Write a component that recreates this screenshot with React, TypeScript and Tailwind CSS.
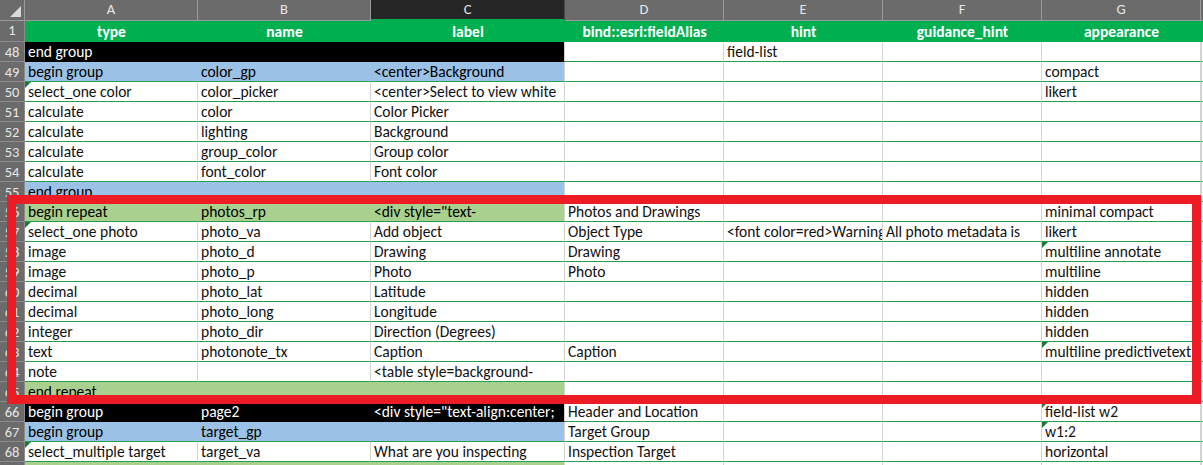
import React from "react";

type Fill = "black" | "blue" | "green" | undefined;
type Row = { n: number; fill?: Fill; c: string[]; tri?: number[]; joinNext?: boolean; hideNum?: boolean };

const rows: Row[] = [
  { n: 48, fill: "black", c: ["end group", "", "", "", "field-list", "", ""], joinNext: true },
  { n: 49, fill: "blue", c: ["begin group", "color_gp", "<center>Background", "", "", "", "compact"] },
  { n: 50, c: ["select_one color", "color_picker", "<center>Select to view white", "", "", "", "likert"], tri: [0] },
  { n: 51, c: ["calculate", "color", "Color Picker", "", "", "", ""] },
  { n: 52, c: ["calculate", "lighting", "Background", "", "", "", ""] },
  { n: 53, c: ["calculate", "group_color", "Group color", "", "", "", ""] },
  { n: 54, c: ["calculate", "font_color", "Font color", "", "", "", ""] },
  { n: 55, fill: "blue", c: ["end group", "", "", "", "", "", ""] },
  { n: 56, fill: "green", c: ["begin repeat", "photos_rp", '<div style="text-', "Photos and Drawings", "", "", "minimal compact"] },
  { n: 57, c: ["select_one photo", "photo_va", "Add object", "Object Type", "<font color=red>Warning", "All photo metadata is", "likert"], tri: [0] },
  { n: 58, c: ["image", "photo_d", "Drawing", "Drawing", "", "", "multiline annotate"], tri: [6] },
  { n: 59, c: ["image", "photo_p", "Photo", "Photo", "", "", "multiline"] },
  { n: 60, c: ["decimal", "photo_lat", "Latitude", "", "", "", "hidden"] },
  { n: 61, c: ["decimal", "photo_long", "Longitude", "", "", "", "hidden"] },
  { n: 62, c: ["integer", "photo_dir", "Direction (Degrees)", "", "", "", "hidden"] },
  { n: 63, c: ["text", "photonote_tx", "Caption", "Caption", "", "", "multiline predictivetext"], tri: [6] },
  { n: 64, c: ["note", "", "<table style=background-", "", "", "", ""] },
  { n: 65, fill: "green", c: ["end repeat", "", "", "", "", "", ""] },
  { n: 66, fill: "black", c: ["begin group", "page2", '<div style="text-align:center;', "Header and Location", "", "", "field-list w2"], tri: [6], joinNext: true },
  { n: 67, fill: "blue", c: ["begin group", "target_gp", "", "Target Group", "", "", "w1:2"], tri: [6] },
  { n: 68, c: ["select_multiple target", "target_va", "What are you inspecting", "Inspection Target", "", "", "horizontal"], tri: [0] },
  { n: 69, fill: "green", c: ["", "", "", "", "", "", ""], hideNum: true },
];

const widths = ["w-[173px]", "w-[173px]", "w-[194px]", "w-[159px]", "w-[159px]", "w-[159px]", "w-[159px]"];
const letters = ["A", "B", "C", "D", "E", "F", "G"];
const headers = ["type", "name", "label", "bind::esri:fieldAlias", "hint", "guidance_hint", "appearance"];

const fillBg: Record<string, string> = {
  black: "bg-black text-white",
  blue: "bg-[#9bc2e6] text-black",
  green: "bg-[#a9d08e] text-black",
};
const fillBorderR: Record<string, string> = {
  black: "border-r-black",
  blue: "border-r-[#9bc2e6]",
  green: "border-r-[#a9d08e]",
};
const fillBorderB: Record<string, string> = {
  black: "border-b-black",
  blue: "border-b-[#9bc2e6]",
  green: "border-b-[#a9d08e]",
};

function Tri() {
  return (
    <span className="absolute left-0 top-0 h-0 w-0 border-t-[6px] border-r-[6px] border-t-[#1f7a36] border-r-transparent" />
  );
}

function DataRow({ r }: { r: Row }) {
  return (
    <div className="flex h-[20px] shrink-0">
      <div className="flex w-[25px] shrink-0 items-center justify-center border-b border-r border-b-[#8c8c8c] border-r-[#8c8c8c] bg-[#6b6b6b] pt-[1px] text-[14.5px] leading-[18px] text-[#e6e6e6]">
        {r.hideNum ? "" : r.n}
      </div>
      {r.c.map((t, i) => {
        const filled = r.fill && i < 3;
        const bg = filled ? fillBg[r.fill as string] : "bg-white text-[#111]";
        const br = filled && i < 2 ? fillBorderR[r.fill as string] : "border-r-[#d4d4d4]";
        const bb = filled && r.joinNext ? fillBorderB[r.fill as string] : "border-b-[#22a04b]";
        return (
          <div
            key={i}
            className={`relative ${widths[i]} shrink-0 overflow-hidden whitespace-nowrap border-b border-r ${bg} ${br} ${bb} pl-[3px] pt-[1px] text-[15.5px] leading-[18px]`}
          >
            {r.tri?.includes(i) && <Tri />}
            {t}
          </div>
        );
      })}
      <div className="w-[2px] shrink-0 border-b border-l border-b-[#22a04b] border-l-[#d4d4d4] bg-white" />
    </div>
  );
}

export default function App() {
  return (
    <div
      className="relative h-[465px] w-[1203px] overflow-hidden bg-white"
      style={{ fontFamily: 'Carlito, Calibri, Lato, "Liberation Sans", sans-serif' }}
    >
      {/* column letters */}
      <div className="flex h-[21px]">
        <div className="relative w-[25px] shrink-0 border-b border-r border-b-[#9a9a9a] border-r-[#9a9a9a] bg-[#6b6b6b]">
          <span className="absolute bottom-[3px] right-[3px] h-0 w-0 border-b-[11px] border-l-[11px] border-b-[#d9d9d9] border-l-transparent" />
        </div>
        {letters.map((l, i) => (
          <div
            key={l}
            className={`${widths[i]} flex shrink-0 items-center justify-center border-r text-[14.5px] ${
              i === 2
                ? "border-b-2 border-b-[#00b050] border-r-[#4a4a4a] bg-[#262626] text-[#e6e6e6]"
                : "border-b border-b-[#9a9a9a] border-r-[#9a9a9a] bg-[#6b6b6b] text-[#e6e6e6]"
            }`}
          >
            {l}
          </div>
        ))}
        <div className="w-[2px] shrink-0 border-b border-b-[#9a9a9a] bg-[#6b6b6b]" />
      </div>
      {/* row 1 header */}
      <div className="flex h-[21px]">
        <div className="flex w-[25px] shrink-0 items-center justify-center border-b border-r border-b-[#8c8c8c] border-r-[#8c8c8c] bg-[#6b6b6b] text-[14.5px] text-[#e6e6e6]">
          1
        </div>
        {headers.map((h, i) => (
          <div
            key={h}
            className={`${widths[i]} flex shrink-0 items-center justify-center bg-[#00b050] pt-[1px] text-[15.5px] font-bold text-white`}
          >
            {h}
          </div>
        ))}
        <div className="w-[2px] shrink-0 bg-[#00b050]" />
      </div>
      {rows.map((r) => (
        <DataRow key={r.n} r={r} />
      ))}
      {/* red highlight frame */}
      <div className="pointer-events-none absolute left-[7px] top-[195px] h-[209px] w-[1194px] border-[9px] border-[#ed1c24]" />
    </div>
  );
}
